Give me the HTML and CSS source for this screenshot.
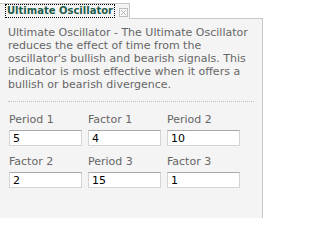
FILE: index.html
```html
<!DOCTYPE html>
<html>
<head>
<meta charset="utf-8">
<link rel="stylesheet" href="styles.css">
</head>
<body>
<div class="tabs">
  <div class="tab">
    <span class="tab-title">Ultimate Oscillator</span>
    <span class="tab-close"><svg width="9" height="9" viewBox="0 0 9 9"><rect x="0.5" y="0.5" width="8" height="8" fill="#fafafa" stroke="#bdbdbd"/><path d="M2 2 L7 7 M7 2 L2 7" stroke="#b5b5b5" stroke-width="1"/></svg></span>
  </div>
</div>
<div class="panel">
  <p class="desc">Ultimate Oscillator - The Ultimate Oscillator reduces the effect of time from the oscillator's bullish and bearish signals. This indicator is most effective when it offers a bullish or bearish divergence.</p>
  <div class="sep"></div>
  <div class="fields">
    <label class="field"><span class="lbl">Period 1</span><input class="inp" type="text" value="5"></label>
    <label class="field"><span class="lbl">Factor 1</span><input class="inp" type="text" value="4"></label>
    <label class="field"><span class="lbl">Period 2</span><input class="inp" type="text" value="10"></label>
    <label class="field"><span class="lbl">Factor 2</span><input class="inp" type="text" value="2"></label>
    <label class="field"><span class="lbl">Period 3</span><input class="inp" type="text" value="15"></label>
    <label class="field"><span class="lbl">Factor 3</span><input class="inp" type="text" value="1"></label>
  </div>
</div>
</body>
</html>
```
FILE: styles.css
```css
html, body {
  margin: 0;
  padding: 0;
  background: #ffffff;
  font-family: "DejaVu Sans", Verdana, sans-serif;
}
.tabs {
  display: flex;
  padding-top: 3px;
  height: 15px;
}
.tab {
  position: relative;
  z-index: 1;
  width: 130px;
  height: 16px;
  background: #f4f4f4;
  border-top: 1px solid #c8c8c8;
  border-right: 1px solid #c8c8c8;
  display: flex;
  align-items: flex-start;
  box-sizing: border-box;
  padding-left: 6px;
}
.tab-title {
  margin-top: 1px;
  font-weight: bold;
  font-size: 10px;
  line-height: 12px;
  color: #1e5c4a;
  outline: 1px dotted #000;
  padding: 0 1px;
}
.tab-close {
  margin-left: 5px;
  margin-top: 4px;
  display: flex;
}
.panel {
  width: 263px;
  box-sizing: border-box;
  background: #f4f4f4;
  border-top: 1px solid #c8c8c8;
  border-right: 1px solid #c8c8c8;
  padding: 7px 8px 30px 8px;
}
.desc {
  margin: 0;
  font-size: 11px;
  line-height: 13px;
  color: #666666;
}
.sep {
  border-top: 1px dotted #c0c0c0;
  margin: 10px 0 11px 0;
}
.fields {
  display: grid;
  grid-template-columns: 73px 73px 73px;
  column-gap: 6px;
  row-gap: 9px;
  padding-left: 1px;
}
.field {
  display: flex;
  flex-direction: column;
}
.lbl {
  font-size: 11px;
  line-height: 13px;
  color: #666666;
  margin-bottom: 4px;
}
.inp {
  width: 73px;
  height: 16px;
  box-sizing: border-box;
  margin: 0;
  padding: 0 3px;
  font-family: "DejaVu Sans", Verdana, sans-serif;
  font-size: 11px;
  color: #000;
  background: #ffffff;
  border: 1px solid #d4d4d4;
  border-top-color: #a8a8a8;
  outline: none;
}
```
